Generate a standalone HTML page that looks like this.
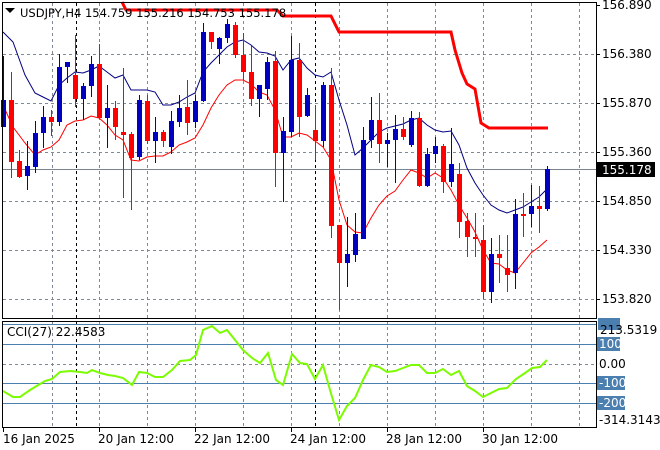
<!DOCTYPE html>
<html><head><meta charset="utf-8"><style>
html,body{margin:0;padding:0;background:#fff;width:660px;height:450px;overflow:hidden}
svg{display:block;font-family:"DejaVu Sans","Liberation Sans",sans-serif}
</style></head><body>
<svg id="s" width="660" height="450" xmlns="http://www.w3.org/2000/svg">
<rect width="660" height="450" fill="#fff"/>
<g id="grid" stroke="#7f8a96" stroke-dasharray="3,3" stroke-width="1"></g>
<line x1="3" y1="169.5" x2="596" y2="169.5" stroke="#7b8590"/>
<g stroke="#4a7fb0" stroke-width="1">
<line x1="3" y1="324.5" x2="596" y2="324.5"/><line x1="3" y1="344.5" x2="596" y2="344.5"/>
<line x1="3" y1="383.5" x2="596" y2="383.5"/><line x1="3" y1="403.5" x2="596" y2="403.5"/>
</g>
<line x1="3" y1="364.5" x2="596" y2="364.5" stroke="#7f8a96" stroke-dasharray="3,3"/>
<g stroke="#000" stroke-dasharray="3,3"><line x1="76.5" y1="3" x2="76.5" y2="318"/><line x1="76.5" y1="321" x2="76.5" y2="427"/><line x1="315.5" y1="3" x2="315.5" y2="318"/><line x1="315.5" y1="321" x2="315.5" y2="427"/></g>
<polyline fill="none" stroke="#ff0000" stroke-width="3" points="122,2 126,10 277,10 283,16 331,16 339,32 451,32 455,50 462,73 467,84 475,89 481,123 489,128 548,128"/>
<polyline fill="none" stroke="#000080" stroke-width="1" points="3,32 13,42 25,75 35,93 43,97 51,101 59,85 67,78 75,72 83,73 91,70 99,66 107,72 115,78 123,75 131,90 139,90 147,90 155,92 163,105 171,105 179,102 187,97 195,93 203,72 211,63 219,55 227,47 235,42 243,40 251,45 259,52 267,53 275,56 283,70 291,60 299,58 307,68 315,75 323,77 331,72 339,100 347,125 355,155 363,148 371,140 379,132 387,128 395,126 403,124 411,120 419,118 427,125 435,130 443,132 451,131 459,145 467,168 475,183 483,195 491,205 499,210 507,213 515,210 523,207 531,202 539,197 547,189"/>
<polyline fill="none" stroke="#ff0000" stroke-width="1" points="3,105 13,127 25,143 35,155 43,150 51,147 59,140 67,125 75,121 83,120 91,116 99,118 107,125 115,135 123,140 131,160 139,161 147,157 155,156 163,156 171,152 179,145 187,142 195,138 203,125 211,108 219,95 227,85 235,80 243,80 251,84 259,92 267,95 275,110 283,137 291,137 299,133 307,135 315,141 323,147 331,160 339,200 347,225 355,232 363,233 371,218 379,205 387,196 395,191 403,180 411,170 419,173 427,178 435,173 443,178 451,190 459,205 467,218 475,232 483,250 491,263 499,264 507,270 515,273 523,263 531,253 539,247 547,240"/>
<g id="candles"></g>
<polyline fill="none" stroke="#7cfc00" stroke-width="2" points="3,391 13,397 20,397 30,390 45,381 52,379 60,372 70,371 80,372 87,373 92,370 100,373 108,375 115,376 123,378 132,385 139,372 147,373 155,377 163,377 172,370 180,361 190,360 196,355 203,330 212,326 220,333 227,330 235,340 243,350 252,358 260,363 268,353 276,380 283,385 292,354 300,363 307,364 315,379 323,365 330,390 339,420 347,406 355,398 363,380 371,365 379,367 387,372 395,371 403,368 411,365 419,365 427,373 435,373 443,369 451,375 459,371 467,386 475,391 483,397 491,393 499,389 507,388 516,379 525,373 532,368 540,367 547,360"/>
<rect x="2.5" y="2.5" width="594" height="316" fill="none" stroke="#000"/>
<rect x="2.5" y="321.5" width="594" height="106" fill="none" stroke="#000"/>
<g font-size="12" fill="#000">
<polygon points="5,8 15,8 10,13" fill="#000"/>
<text x="20" y="17" fill="#000" font-size="11.5">USDJPY,H4  154.759 155.216 154.753 155.178</text>
<text x="7" y="336">CCI(27) 22.4583</text>
</g>
<g id="ticks" stroke="#000"></g>
<g font-size="12" fill="#000" id="rl">
<text x="602" y="9">156.890</text><text x="602" y="58">156.380</text><text x="602" y="107">155.870</text><text x="602" y="156">155.360</text><text x="602" y="205">154.850</text><text x="602" y="254">154.330</text><text x="602" y="303">153.820</text>
</g>
<rect x="597" y="162" width="58" height="15" fill="#000"/>
<text x="602" y="174" font-size="12" fill="#fff">155.178</text>
<rect x="598" y="318" width="22" height="12" fill="#4a7fb0"/>
<text x="600" y="334" font-size="12" fill="#000">213.5319</text>
<rect x="597" y="337" width="23" height="14" fill="#4a7fb0"/><text x="599" y="348" font-size="12" fill="#fff">100</text>
<text x="599" y="368" font-size="12" fill="#000">0.00</text>
<rect x="597" y="376" width="28" height="14" fill="#4a7fb0"/><text x="599" y="387" font-size="12" fill="#fff">-100</text>
<rect x="597" y="396" width="28" height="14" fill="#4a7fb0"/><text x="599" y="407" font-size="12" fill="#fff">-200</text>
<text x="599" y="424" font-size="12" fill="#000">-314.3143</text>
<g font-size="12" fill="#000">
<text x="3" y="443">16 Jan 2025</text><text x="98" y="443">20 Jan 12:00</text><text x="194" y="443">22 Jan 12:00</text><text x="290" y="443">24 Jan 12:00</text><text x="386" y="443">28 Jan 12:00</text><text x="482" y="443">30 Jan 12:00</text>
</g>
</svg>
<script>
var NS="http://www.w3.org/2000/svg";
function el(p,t,a){var e=document.createElementNS(NS,t);for(var k in a)e.setAttribute(k,a[k]);p.appendChild(e);return e;}
var g=document.getElementById('grid');
[54,103,152,201,250,299].forEach(function(y){el(g,'line',{x1:3,x2:596,y1:y+.5,y2:y+.5});});
[52,99,147,195,243,291,339,387,435,483,531,579].forEach(function(x){el(g,'line',{x1:x+.5,x2:x+.5,y1:3,y2:318});el(g,'line',{x1:x+.5,x2:x+.5,y1:321,y2:427});});
var tk=document.getElementById('ticks');
[3,99,195,291,387,483].forEach(function(x){el(tk,'line',{x1:x+.5,x2:x+.5,y1:428,y2:432});});
[5,54,103,152,201,250,299].forEach(function(y){el(tk,'line',{x1:596,x2:600,y1:y+.5,y2:y+.5});});
var C=[[1,100,127,56,127],[0,100,162,72,178],[0,161,177,150,178],[1,166,176,141,190],[1,133,167,121,173],[1,117,133,106,148],[0,117,122,110,136],[1,67,122,54,126],[1,62,67,62,83],[0,75,99,35,107],[1,86,99,83,120],[1,64,86,56,97],[0,64,118,44,118],[1,108,118,85,148],[0,108,127,101,140],[0,132,135,68,198],[0,134,158,132,210],[1,100,157,95,160],[0,101,141,95,144],[1,132,141,117,163],[0,132,141,130,147],[1,121,147,111,154],[1,108,122,95,127],[0,107,123,80,135],[1,101,122,95,128],[1,32,101,23,102],[0,32,42,32,49],[1,38,49,37,64],[1,24,38,19,43],[0,25,55,22,58],[0,55,72,33,80],[0,72,99,46,106],[1,85,99,85,117],[1,62,89,57,100],[0,61,153,51,187],[1,131,153,117,202],[1,60,132,36,137],[0,60,117,43,137],[1,95,116,88,117],[0,130,141,105,160],[1,85,141,82,147],[0,85,226,68,238],[0,225,263,225,310],[1,254,263,217,287],[1,234,255,213,262],[1,140,239,127,239],[1,120,140,97,148],[0,120,144,93,163],[1,140,144,133,167],[1,129,140,115,183],[0,129,137,117,140],[1,118,145,111,147],[0,118,186,112,187],[1,154,186,148,187],[1,146,154,137,163],[0,146,182,144,193],[1,164,182,128,187],[0,174,222,163,238],[0,221,237,213,257],[0,237,239,213,257],[0,240,292,225,299],[1,254,292,238,303],[0,254,258,235,283],[0,268,275,235,292],[1,214,273,199,289],[0,214,215,193,237],[1,206,214,185,227],[0,206,209,186,233],[1,169,209,166,211]];
var cg=document.getElementById('candles');
C.forEach(function(c,i){var x=3+8*i;var col=c[0]?'#0000c0':'#ff0000';
el(cg,'rect',{x:x,y:c[3],width:1,height:c[4]-c[3],fill:col});
el(cg,'rect',{x:x-2,y:c[1],width:5,height:Math.max(2,c[2]-c[1]),fill:col});});
</script>
</body></html>
